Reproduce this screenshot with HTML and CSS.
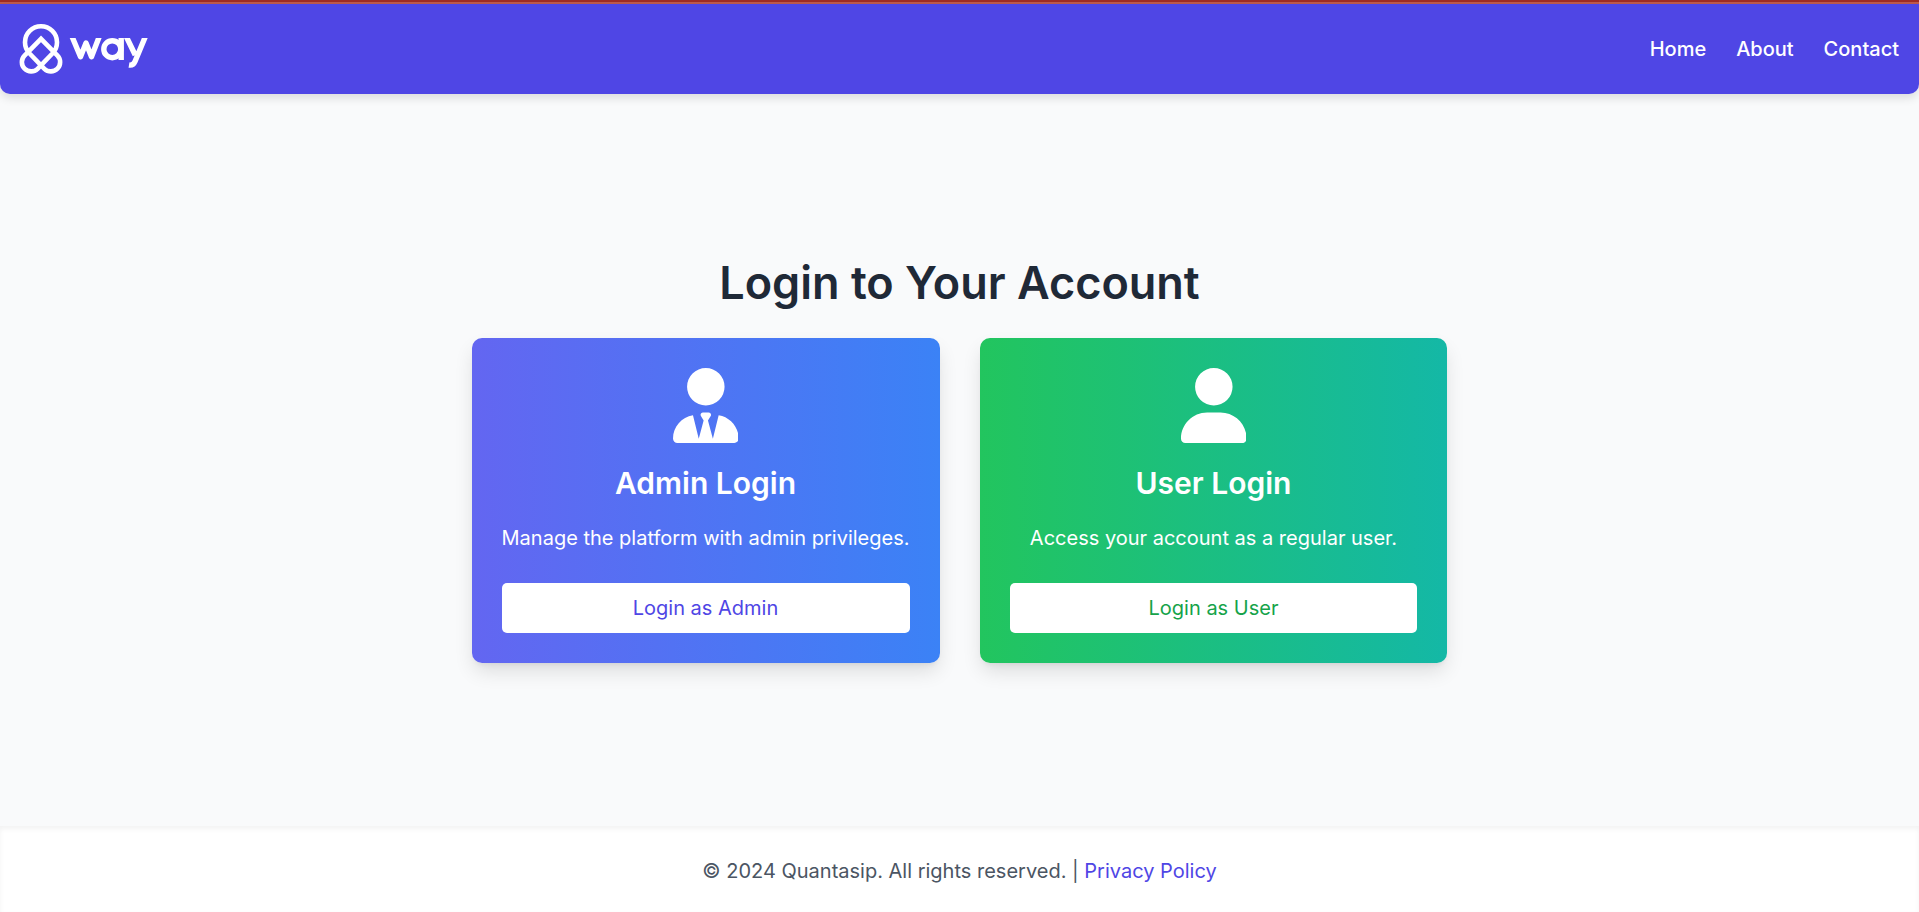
FILE: index.html
```html
<!DOCTYPE html>
<html lang="en">
<head>
<meta charset="utf-8">
<meta name="viewport" content="width=device-width, initial-scale=1">
<title>Login</title>
<link rel="stylesheet" href="styles.css">
</head>
<body>
<div class="progress"></div>
<header class="header">
  <a class="brand" href="#" aria-label="way">
    <svg class="brand-mark" viewBox="0 0 44 50" aria-hidden="true">
      <path d="M21 14.800L4.500 31.600A9.300 9.300 0 0 0 17.600 44.800L32.400 29.500A16 16 0 1 0 9.600 29.500L24.400 44.800A9.300 9.300 0 0 0 37.500 31.600Z"/>
    </svg>
    <svg class="brand-word" viewBox="0 0 80 30" aria-hidden="true">
      <path d="M2.800 -2L11.500 18.800L17 5L22.500 18.800L30.500 -2"/>
      <circle cx="43.300" cy="11.200" r="8.500"/>
      <path d="M52.200 0V22M57 -2L66.200 17M76.600 -2L66 23.500Q64.200 27.700 60 27"/>
    </svg>
  </a>
  <nav class="nav">
    <a href="#">Home</a>
    <a href="#">About</a>
    <a href="#">Contact</a>
  </nav>
</header>
<main class="main">
  <h1 class="title">Login to Your Account</h1>
  <div class="cards">
    <section class="card card-admin">
      <svg class="card-icon" viewBox="0 0 448 512" aria-hidden="true"><path d="M96 128a128 128 0 1 0 256 0A128 128 0 1 0 96 128zm113.100 231.200l-18.600-31c-6.400-10.700 1.300-24.200 13.700-24.200h39.500c12.400 0 20.100 13.600 13.700 24.200l-18.600 31 33.400 123.900 39.500-161.200C388.900 333.900 448 400.700 448 481.300c0 17-13.800 30.700-30.700 30.700H30.700C13.800 512 0 498.200 0 481.300 0 400.700 59.100 333.900 136.300 321.900l39.500 161.200z"/></svg>
      <h2 class="card-title">Admin Login</h2>
      <p class="card-text">Manage the platform with admin privileges.</p>
      <button class="card-button" type="button">Login as Admin</button>
    </section>
    <section class="card card-user">
      <svg class="card-icon" viewBox="0 0 448 512" aria-hidden="true"><path d="M224 256A128 128 0 1 0 224 0a128 128 0 1 0 0 256zm-45.700 48C79.800 304 0 383.800 0 482.300 0 498.700 13.300 512 29.700 512H418.300c16.400 0 29.700-13.300 29.700-29.700C448 383.800 368.200 304 269.700 304z"/></svg>
      <h2 class="card-title">User Login</h2>
      <p class="card-text">Access your account as a regular user.</p>
      <button class="card-button" type="button">Login as User</button>
    </section>
  </div>
</main>
<footer class="footer">© 2024 Quantasip. All rights reserved. | <a href="#">Privacy Policy</a></footer>
</body>
</html>
```
FILE: styles.css
```css
* {
  box-sizing: border-box;
}

body {
  margin: 0;
  min-height: 100vh;
  display: flex;
  flex-direction: column;
  background: #f9fafb;
  color: #1f2937;
  font: 20px/30px Inter, sans-serif;
}

h1,
h2,
p {
  margin: 0;
}

a {
  text-decoration: none;
}

.progress {
  height: 4px;
  background: linear-gradient(#a02c24 50%, #c05a4c 50%);
}

.header {
  display: flex;
  align-items: center;
  justify-content: space-between;
  padding: 20px;
  background: #4f46e5;
  border-radius: 0 0 10px 10px;
  box-shadow: 0 4px 10px rgba(0, 0, 0, 0.12);
}

.brand {
  display: flex;
  align-items: center;
  gap: 5px;
  fill: none;
  stroke: #fff;
}

.brand-mark {
  width: 44px;
  height: 50px;
  overflow: visible;
  stroke-width: 4.6;
}

.brand-word {
  width: 80px;
  height: 38px;
  padding-top: 8px;
  stroke-width: 5.4;
  stroke-linejoin: round;
}

.nav {
  display: flex;
  gap: 30px;
  font-weight: 500;
}

.nav a {
  color: #fff;
}

.main {
  flex: 1;
  display: flex;
  flex-direction: column;
  align-items: center;
  justify-content: center;
  gap: 30px;
}

.title {
  font-size: 45px;
  line-height: 50px;
  font-weight: 600;
}

.cards {
  display: grid;
  grid-template-columns: 1fr 1fr;
  gap: 40px;
}

.card {
  display: flex;
  flex-direction: column;
  align-items: center;
  padding: 30px;
  border-radius: 10px;
  color: #fff;
  box-shadow: 0 10px 20px -2px rgba(0, 0, 0, 0.12), 0 4px 6px -4px rgba(0, 0, 0, 0.1);
}

.card-admin {
  background: linear-gradient(to right, #6366f1, #3b82f6);
}

.card-user {
  background: linear-gradient(to right, #22c55e, #14b8a6);
}

.card-icon {
  height: 75px;
  margin-bottom: 20px;
  fill: #fff;
}

.card-title {
  margin-bottom: 20px;
  font-size: 30px;
  line-height: 40px;
  font-weight: 600;
}

.card-text {
  margin-bottom: 30px;
}

.card-button {
  width: 100%;
  padding: 10px 20px;
  border: 0;
  border-radius: 5px;
  background: #fff;
  font: inherit;
}

.card-admin .card-button {
  color: #4f46e5;
}

.card-user .card-button {
  color: #16a34a;
}

.footer {
  padding: 30px 20px 26px;
  background: #fff;
  color: #4b5563;
  text-align: center;
  box-shadow: inset 0 3px 5px rgba(0, 0, 0, 0.05);
}

.footer a {
  color: #4f46e5;
}
```
